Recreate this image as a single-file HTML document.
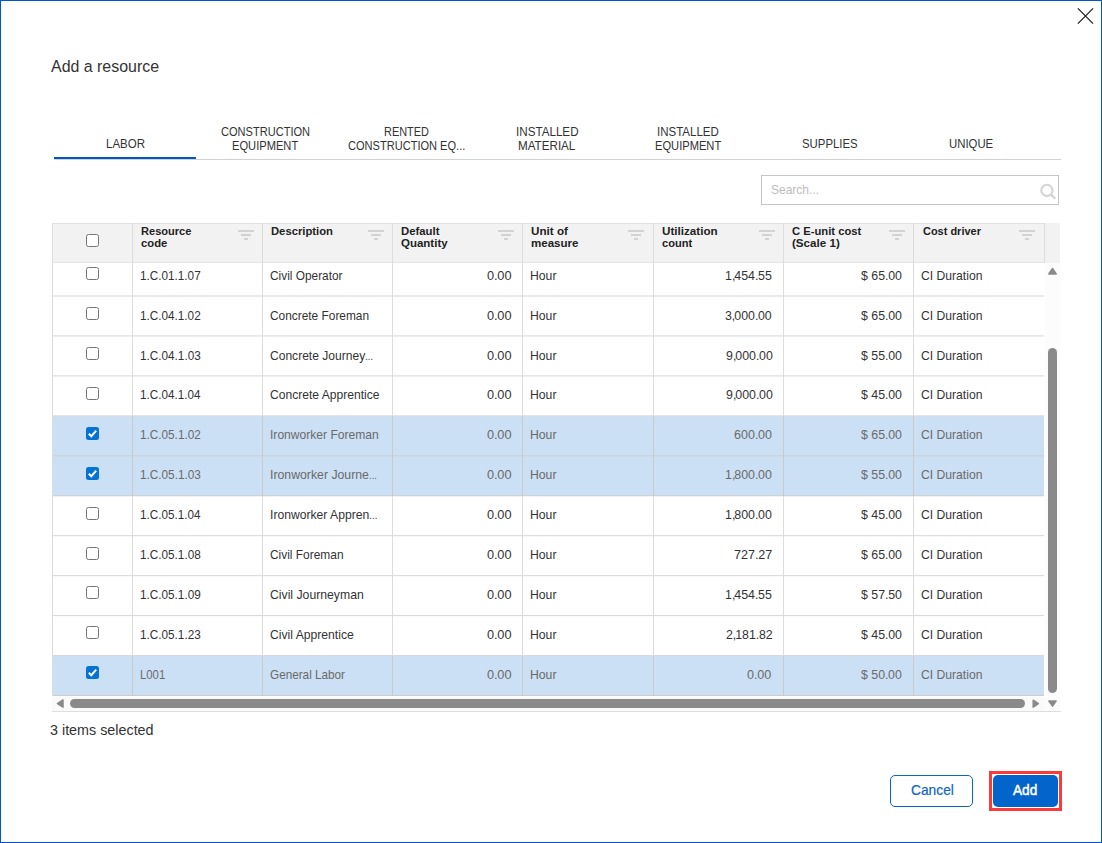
<!DOCTYPE html><html><head><meta charset="utf-8"><title>Add a resource</title><style>

html,body{margin:0;padding:0;background:#fff;}
body{width:1102px;height:843px;position:relative;overflow:hidden;font-family:"Liberation Sans",sans-serif;}
.a{position:absolute;}
.t{position:absolute;white-space:nowrap;line-height:20px;height:20px;transform-origin:0 50%;}
.cb{position:absolute;width:11px;height:11px;border:1px solid #767676;border-radius:2.5px;background:#fff;}
.cm{margin-right:-1.1px}.pd{margin-right:-0.4px}
.cbk{position:absolute;width:13px;height:13px;border-radius:2.5px;background:#0573d4;}
.sel{position:absolute;left:53px;width:991px;height:40px;background:#cbdff5;}
.f{position:absolute;background:#d2d2d2;height:2px;}

</style></head><body>
<div class="a" style="left:0;top:0;width:1100px;height:841px;border:1px solid #0058c8;"></div>
<svg class="a" style="left:1073px;top:4px" width="24" height="24" viewBox="0 0 24 24"><path d="M4.9 4.4 L20.1 19.6 M20.1 4.4 L4.9 19.6" stroke="#1e1e1e" stroke-width="1.25" fill="none"/></svg>
<div class="a" style="left:54px;top:159px;width:1007px;height:1px;background:#d2d2d2;"></div>
<div class="a" style="left:54px;top:157px;width:142px;height:2px;background:#0058c8;"></div>
<div class="a" style="left:761px;top:175px;width:296px;height:28px;border:1px solid #c6c6c6;background:#fff;"></div>
<svg class="a" style="left:1037px;top:181px" width="22" height="22" viewBox="0 0 22 22"><circle cx="9.9" cy="9.4" r="5.6" stroke="#d4d4d4" stroke-width="2.1" fill="none"/><path d="M14 13.6 L18.3 17.8" stroke="#d4d4d4" stroke-width="2.3" fill="none"/></svg>
<div class="a" style="left:52px;top:223px;width:1008px;height:40px;background:#f2f2f2;"></div>
<div class="a" style="left:52px;top:223px;width:993px;height:1px;background:#e0e0e0;"></div>
<div class="a" style="left:52px;top:262px;width:993px;height:1px;background:#e4e4e4;"></div>
<div class="a" style="left:53px;top:416px;width:991px;height:40px;background:#cbdff5;"></div>
<div class="a" style="left:53px;top:456px;width:991px;height:40px;background:#cbdff5;"></div>
<div class="a" style="left:53px;top:656px;width:991px;height:39px;background:#cbdff5;"></div>
<div class="a" style="left:53px;top:295px;width:991px;height:1px;background:rgba(214,214,214,0.50);"></div><div class="a" style="left:53px;top:296px;width:991px;height:1px;background:rgba(214,214,214,0.50);"></div>
<div class="a" style="left:53px;top:335px;width:991px;height:1px;background:rgba(214,214,214,0.55);"></div><div class="a" style="left:53px;top:336px;width:991px;height:1px;background:rgba(214,214,214,0.45);"></div>
<div class="a" style="left:53px;top:375px;width:991px;height:1px;background:rgba(214,214,214,0.60);"></div><div class="a" style="left:53px;top:376px;width:991px;height:1px;background:rgba(214,214,214,0.40);"></div>
<div class="a" style="left:53px;top:415px;width:991px;height:1px;background:rgba(214,214,214,0.65);"></div><div class="a" style="left:53px;top:416px;width:991px;height:1px;background:rgba(214,214,214,0.35);"></div>
<div class="a" style="left:53px;top:455px;width:991px;height:1px;background:rgba(205,205,205,0.70);"></div><div class="a" style="left:53px;top:456px;width:991px;height:1px;background:rgba(205,205,205,0.30);"></div>
<div class="a" style="left:53px;top:495px;width:991px;height:1px;background:rgba(205,205,205,0.75);"></div><div class="a" style="left:53px;top:496px;width:991px;height:1px;background:rgba(205,205,205,0.25);"></div>
<div class="a" style="left:53px;top:535px;width:991px;height:1px;background:rgba(214,214,214,0.80);"></div><div class="a" style="left:53px;top:536px;width:991px;height:1px;background:rgba(214,214,214,0.20);"></div>
<div class="a" style="left:53px;top:575px;width:991px;height:1px;background:rgba(214,214,214,0.85);"></div><div class="a" style="left:53px;top:576px;width:991px;height:1px;background:rgba(214,214,214,0.15);"></div>
<div class="a" style="left:53px;top:615px;width:991px;height:1px;background:rgba(214,214,214,0.90);"></div><div class="a" style="left:53px;top:616px;width:991px;height:1px;background:rgba(214,214,214,0.10);"></div>
<div class="a" style="left:53px;top:655px;width:991px;height:1px;background:rgba(214,214,214,0.95);"></div><div class="a" style="left:53px;top:656px;width:991px;height:1px;background:rgba(214,214,214,0.05);"></div>
<div class="a" style="left:53px;top:695px;width:991px;height:1px;background:rgba(205,205,205,1.00);"></div>
<div class="a" style="left:52px;top:223px;width:1px;height:473px;background:#dcdcdc;"></div>
<div class="a" style="left:132px;top:223px;width:1px;height:473px;background:#dcdcdc;"></div>
<div class="a" style="left:262px;top:223px;width:1px;height:473px;background:#dcdcdc;"></div>
<div class="a" style="left:392px;top:223px;width:1px;height:473px;background:#dcdcdc;"></div>
<div class="a" style="left:522px;top:223px;width:1px;height:473px;background:#dcdcdc;"></div>
<div class="a" style="left:653px;top:223px;width:1px;height:473px;background:#dcdcdc;"></div>
<div class="a" style="left:783px;top:223px;width:1px;height:473px;background:#dcdcdc;"></div>
<div class="a" style="left:913px;top:223px;width:1px;height:473px;background:#dcdcdc;"></div>
<div class="a" style="left:1044px;top:223px;width:1px;height:40px;background:#dcdcdc;"></div>
<div class="a" style="left:132px;top:416px;width:1px;height:40px;background:#cacaca;"></div>
<div class="a" style="left:262px;top:416px;width:1px;height:40px;background:#cacaca;"></div>
<div class="a" style="left:392px;top:416px;width:1px;height:40px;background:#cacaca;"></div>
<div class="a" style="left:522px;top:416px;width:1px;height:40px;background:#cacaca;"></div>
<div class="a" style="left:653px;top:416px;width:1px;height:40px;background:#cacaca;"></div>
<div class="a" style="left:783px;top:416px;width:1px;height:40px;background:#cacaca;"></div>
<div class="a" style="left:913px;top:416px;width:1px;height:40px;background:#cacaca;"></div>
<div class="a" style="left:132px;top:456px;width:1px;height:40px;background:#cacaca;"></div>
<div class="a" style="left:262px;top:456px;width:1px;height:40px;background:#cacaca;"></div>
<div class="a" style="left:392px;top:456px;width:1px;height:40px;background:#cacaca;"></div>
<div class="a" style="left:522px;top:456px;width:1px;height:40px;background:#cacaca;"></div>
<div class="a" style="left:653px;top:456px;width:1px;height:40px;background:#cacaca;"></div>
<div class="a" style="left:783px;top:456px;width:1px;height:40px;background:#cacaca;"></div>
<div class="a" style="left:913px;top:456px;width:1px;height:40px;background:#cacaca;"></div>
<div class="a" style="left:132px;top:656px;width:1px;height:40px;background:#cacaca;"></div>
<div class="a" style="left:262px;top:656px;width:1px;height:40px;background:#cacaca;"></div>
<div class="a" style="left:392px;top:656px;width:1px;height:40px;background:#cacaca;"></div>
<div class="a" style="left:522px;top:656px;width:1px;height:40px;background:#cacaca;"></div>
<div class="a" style="left:653px;top:656px;width:1px;height:40px;background:#cacaca;"></div>
<div class="a" style="left:783px;top:656px;width:1px;height:40px;background:#cacaca;"></div>
<div class="a" style="left:913px;top:656px;width:1px;height:40px;background:#cacaca;"></div>
<div class="f" style="left:238px;top:230px;width:16px"></div>
<div class="f" style="left:241px;top:234px;width:10px"></div>
<div class="f" style="left:244px;top:238px;width:4px"></div>
<div class="f" style="left:368px;top:230px;width:16px"></div>
<div class="f" style="left:371px;top:234px;width:10px"></div>
<div class="f" style="left:374px;top:238px;width:4px"></div>
<div class="f" style="left:498px;top:230px;width:16px"></div>
<div class="f" style="left:501px;top:234px;width:10px"></div>
<div class="f" style="left:504px;top:238px;width:4px"></div>
<div class="f" style="left:628px;top:230px;width:16px"></div>
<div class="f" style="left:631px;top:234px;width:10px"></div>
<div class="f" style="left:634px;top:238px;width:4px"></div>
<div class="f" style="left:759px;top:230px;width:16px"></div>
<div class="f" style="left:762px;top:234px;width:10px"></div>
<div class="f" style="left:765px;top:238px;width:4px"></div>
<div class="f" style="left:889px;top:230px;width:16px"></div>
<div class="f" style="left:892px;top:234px;width:10px"></div>
<div class="f" style="left:895px;top:238px;width:4px"></div>
<div class="f" style="left:1019px;top:230px;width:16px"></div>
<div class="f" style="left:1022px;top:234px;width:10px"></div>
<div class="f" style="left:1025px;top:238px;width:4px"></div>
<div class="cb" style="left:86px;top:234px"></div>
<div class="cb" style="left:86px;top:267px"></div>
<div class="cb" style="left:86px;top:307px"></div>
<div class="cb" style="left:86px;top:347px"></div>
<div class="cb" style="left:86px;top:387px"></div>
<div class="cbk" style="left:86px;top:427px"><svg width="13" height="13" viewBox="0 0 13 13" style="display:block"><path d="M2.8 6.7 L5.3 9.2 L10.2 3.6" stroke="#fff" stroke-width="2" fill="none"/></svg></div>
<div class="cbk" style="left:86px;top:467px"><svg width="13" height="13" viewBox="0 0 13 13" style="display:block"><path d="M2.8 6.7 L5.3 9.2 L10.2 3.6" stroke="#fff" stroke-width="2" fill="none"/></svg></div>
<div class="cb" style="left:86px;top:507px"></div>
<div class="cb" style="left:86px;top:547px"></div>
<div class="cb" style="left:86px;top:586px"></div>
<div class="cb" style="left:86px;top:626px"></div>
<div class="cbk" style="left:86px;top:666px"><svg width="13" height="13" viewBox="0 0 13 13" style="display:block"><path d="M2.8 6.7 L5.3 9.2 L10.2 3.6" stroke="#fff" stroke-width="2" fill="none"/></svg></div>
<div class="a" style="left:1045px;top:263px;width:15px;height:448px;background:#fcfcfc;"></div>
<div class="a" style="left:52px;top:697px;width:993px;height:14px;background:#fafafa;"></div>
<div class="a" style="left:52px;top:711px;width:1009px;height:1px;background:#dedede;"></div>
<div class="a" style="left:1048px;top:348px;width:9px;height:345px;border-radius:4.5px;background:#8a8a8a;"></div>
<div class="a" style="left:70px;top:699px;width:955px;height:9px;border-radius:4.5px;background:#8a8a8a;"></div>
<svg class="a" style="left:0;top:0" width="1102" height="843" viewBox="0 0 1102 843"><g fill="#8a8a8a" stroke="#8a8a8a" stroke-width="1.5" stroke-linejoin="round"><path d="M57.4 703.6 L63 700 L63 707.2 Z"/><path d="M1038.3 703.7 L1033.2 700.2 L1033.2 707.2 Z"/><path d="M1052.5 706.1 L1048.9 701.1 L1056.1 701.1 Z"/><path d="M1052.5 268.5 L1048.8 274 L1056.2 274 Z"/></g></svg>
<div class="a" style="left:890px;top:775px;width:81px;height:30px;border:1px solid #0b63ce;border-radius:5px;background:#fff;"></div>
<div class="a" style="left:989px;top:771px;width:67px;height:34px;border:3px solid #fd3a3a;"></div>
<div class="a" style="left:993px;top:775px;width:65px;height:32px;border-radius:5px;background:#0364cc;"></div>
<div class="t" id="s0" style="left:51.29px;top:56.35px;font-size:16.3px;font-weight:400;color:#333;transform:scaleX(0.9785)">Add a resource</div>
<div class="t" id="s1" style="left:105.68px;top:133.50px;font-size:13px;font-weight:400;color:#333;transform:scaleX(0.8834)">LABOR</div>
<div class="t" id="s2" style="left:221.05px;top:121.50px;font-size:13px;font-weight:400;color:#333;transform:scaleX(0.8503)">CONSTRUCTION</div>
<div class="t" id="s3" style="left:231.56px;top:135.50px;font-size:13px;font-weight:400;color:#333;transform:scaleX(0.8567)">EQUIPMENT</div>
<div class="t" id="s4" style="left:383.93px;top:121.50px;font-size:13px;font-weight:400;color:#333;transform:scaleX(0.8392)">RENTED</div>
<div class="t" id="s5" style="left:347.89px;top:135.50px;font-size:13px;font-weight:400;color:#333;transform:scaleX(0.8502)">CONSTRUCTION EQ...</div>
<div class="t" id="s6" style="left:516.31px;top:121.50px;font-size:13px;font-weight:400;color:#333;transform:scaleX(0.8955)">INSTALLED</div>
<div class="t" id="s7" style="left:518.05px;top:135.50px;font-size:13px;font-weight:400;color:#333;transform:scaleX(0.8954)">MATERIAL</div>
<div class="t" id="s8" style="left:657.14px;top:121.50px;font-size:13px;font-weight:400;color:#333;transform:scaleX(0.8857)">INSTALLED</div>
<div class="t" id="s9" style="left:654.79px;top:135.50px;font-size:13px;font-weight:400;color:#333;transform:scaleX(0.8567)">EQUIPMENT</div>
<div class="t" id="s10" style="left:802.34px;top:133.50px;font-size:13px;font-weight:400;color:#333;transform:scaleX(0.8754)">SUPPLIES</div>
<div class="t" id="s11" style="left:948.51px;top:133.50px;font-size:13px;font-weight:400;color:#333;transform:scaleX(0.8736)">UNIQUE</div>
<div class="t" id="s12" style="left:770.97px;top:179.50px;font-size:13px;font-weight:400;color:#bcbcbc;transform:scaleX(0.9236)">Search...</div>
<div class="t" id="s13" style="left:141.00px;top:220.98px;font-size:11.6px;font-weight:700;color:#222;transform:scaleX(0.9543)">Resource</div>
<div class="t" id="s14" style="left:141.00px;top:232.98px;font-size:11.6px;font-weight:700;color:#222;transform:scaleX(0.9720)">code</div>
<div class="t" id="s15" style="left:271.00px;top:220.98px;font-size:11.6px;font-weight:700;color:#222;transform:scaleX(0.9704)">Description</div>
<div class="t" id="s16" style="left:401.10px;top:220.98px;font-size:11.6px;font-weight:700;color:#222;transform:scaleX(0.9797)">Default</div>
<div class="t" id="s17" style="left:401.10px;top:232.98px;font-size:11.6px;font-weight:700;color:#222;transform:scaleX(0.9911)">Quantity</div>
<div class="t" id="s18" style="left:531.10px;top:220.98px;font-size:11.6px;font-weight:700;color:#222;transform:scaleX(1.0062)">Unit of</div>
<div class="t" id="s19" style="left:531.10px;top:232.98px;font-size:11.6px;font-weight:700;color:#222;transform:scaleX(0.9963)">measure</div>
<div class="t" id="s20" style="left:661.50px;top:220.98px;font-size:11.6px;font-weight:700;color:#222;transform:scaleX(1.0056)">Utilization</div>
<div class="t" id="s21" style="left:661.50px;top:232.98px;font-size:11.6px;font-weight:700;color:#222;transform:scaleX(0.9562)">count</div>
<div class="t" id="s22" style="left:792.20px;top:220.98px;font-size:11.6px;font-weight:700;color:#222;transform:scaleX(0.9683)">C E-unit cost</div>
<div class="t" id="s23" style="left:792.20px;top:232.98px;font-size:11.6px;font-weight:700;color:#222;transform:scaleX(1.0021)">(Scale 1)</div>
<div class="t" id="s24" style="left:922.60px;top:220.98px;font-size:11.6px;font-weight:700;color:#222;transform:scaleX(0.9460)">Cost driver</div>
<div class="t" id="s25" style="left:140.10px;top:265.50px;font-size:13px;font-weight:400;color:#333;transform:scaleX(0.9025)">1.C.01.1.07</div>
<div class="t" id="s26" style="left:269.90px;top:265.50px;font-size:13px;font-weight:400;color:#333;transform:scaleX(0.9127)">Civil Operator</div>
<div class="t" id="s27" style="left:487.44px;top:265.50px;font-size:13px;font-weight:400;color:#333;transform:scaleX(0.9824)">0<span class="pd">.</span>00</div>
<div class="t" id="s28" style="left:530.10px;top:265.50px;font-size:13px;font-weight:400;color:#333;transform:scaleX(0.9391)">Hour</div>
<div class="t" id="s29" style="left:725.04px;top:265.50px;font-size:13px;font-weight:400;color:#333;transform:scaleX(0.9543)">1<span class="cm">,</span>454<span class="pd">.</span>55</div>
<div class="t" id="s30" style="left:861.07px;top:265.50px;font-size:13px;font-weight:400;color:#333;transform:scaleX(0.9517)">$ 65<span class="pd">.</span>00</div>
<div class="t" id="s31" style="left:921.10px;top:265.50px;font-size:13px;font-weight:400;color:#333;transform:scaleX(0.9343)">CI Duration</div>
<div class="t" id="s32" style="left:140.10px;top:305.50px;font-size:13px;font-weight:400;color:#333;transform:scaleX(0.9026)">1.C.04.1.02</div>
<div class="t" id="s33" style="left:269.90px;top:305.50px;font-size:13px;font-weight:400;color:#333;transform:scaleX(0.9143)">Concrete Foreman</div>
<div class="t" id="s34" style="left:487.44px;top:305.50px;font-size:13px;font-weight:400;color:#333;transform:scaleX(0.9824)">0<span class="pd">.</span>00</div>
<div class="t" id="s35" style="left:530.10px;top:305.50px;font-size:13px;font-weight:400;color:#333;transform:scaleX(0.9391)">Hour</div>
<div class="t" id="s36" style="left:725.29px;top:305.50px;font-size:13px;font-weight:400;color:#333;transform:scaleX(0.9496)">3<span class="cm">,</span>000<span class="pd">.</span>00</div>
<div class="t" id="s37" style="left:861.07px;top:305.50px;font-size:13px;font-weight:400;color:#333;transform:scaleX(0.9517)">$ 65<span class="pd">.</span>00</div>
<div class="t" id="s38" style="left:921.10px;top:305.50px;font-size:13px;font-weight:400;color:#333;transform:scaleX(0.9343)">CI Duration</div>
<div class="t" id="s39" style="left:140.10px;top:345.50px;font-size:13px;font-weight:400;color:#333;transform:scaleX(0.9036)">1.C.04.1.03</div>
<div class="t" id="s40" style="left:269.90px;top:345.50px;font-size:13px;font-weight:400;color:#333;transform:scaleX(0.9276)">Concrete Journey<span style="font-size:10px;letter-spacing:0.1px">...</span></div>
<div class="t" id="s41" style="left:487.44px;top:345.50px;font-size:13px;font-weight:400;color:#333;transform:scaleX(0.9824)">0<span class="pd">.</span>00</div>
<div class="t" id="s42" style="left:530.10px;top:345.50px;font-size:13px;font-weight:400;color:#333;transform:scaleX(0.9391)">Hour</div>
<div class="t" id="s43" style="left:725.58px;top:345.50px;font-size:13px;font-weight:400;color:#333;transform:scaleX(0.9521)">9<span class="cm">,</span>000<span class="pd">.</span>00</div>
<div class="t" id="s44" style="left:861.07px;top:345.50px;font-size:13px;font-weight:400;color:#333;transform:scaleX(0.9517)">$ 55<span class="pd">.</span>00</div>
<div class="t" id="s45" style="left:921.10px;top:345.50px;font-size:13px;font-weight:400;color:#333;transform:scaleX(0.9343)">CI Duration</div>
<div class="t" id="s46" style="left:140.10px;top:384.50px;font-size:13px;font-weight:400;color:#333;transform:scaleX(0.8992)">1.C.04.1.04</div>
<div class="t" id="s47" style="left:269.90px;top:384.50px;font-size:13px;font-weight:400;color:#333;transform:scaleX(0.9299)">Concrete Apprentice</div>
<div class="t" id="s48" style="left:487.44px;top:384.50px;font-size:13px;font-weight:400;color:#333;transform:scaleX(0.9824)">0<span class="pd">.</span>00</div>
<div class="t" id="s49" style="left:530.10px;top:384.50px;font-size:13px;font-weight:400;color:#333;transform:scaleX(0.9391)">Hour</div>
<div class="t" id="s50" style="left:725.58px;top:384.50px;font-size:13px;font-weight:400;color:#333;transform:scaleX(0.9521)">9<span class="cm">,</span>000<span class="pd">.</span>00</div>
<div class="t" id="s51" style="left:861.07px;top:384.50px;font-size:13px;font-weight:400;color:#333;transform:scaleX(0.9517)">$ 45<span class="pd">.</span>00</div>
<div class="t" id="s52" style="left:921.10px;top:384.50px;font-size:13px;font-weight:400;color:#333;transform:scaleX(0.9343)">CI Duration</div>
<div class="t" id="s53" style="left:140.10px;top:424.50px;font-size:13px;font-weight:400;color:#6a6a6a;transform:scaleX(0.9039)">1.C.05.1.02</div>
<div class="t" id="s54" style="left:269.90px;top:424.50px;font-size:13px;font-weight:400;color:#6a6a6a;transform:scaleX(0.9290)">Ironworker Foreman</div>
<div class="t" id="s55" style="left:487.44px;top:424.50px;font-size:13px;font-weight:400;color:#6a6a6a;transform:scaleX(0.9824)">0<span class="pd">.</span>00</div>
<div class="t" id="s56" style="left:530.10px;top:424.50px;font-size:13px;font-weight:400;color:#6a6a6a;transform:scaleX(0.9391)">Hour</div>
<div class="t" id="s57" style="left:734.00px;top:424.50px;font-size:13px;font-weight:400;color:#6a6a6a;transform:scaleX(0.9633)">600<span class="pd">.</span>00</div>
<div class="t" id="s58" style="left:861.07px;top:424.50px;font-size:13px;font-weight:400;color:#6a6a6a;transform:scaleX(0.9517)">$ 65<span class="pd">.</span>00</div>
<div class="t" id="s59" style="left:921.10px;top:424.50px;font-size:13px;font-weight:400;color:#6a6a6a;transform:scaleX(0.9343)">CI Duration</div>
<div class="t" id="s60" style="left:140.10px;top:464.50px;font-size:13px;font-weight:400;color:#6a6a6a;transform:scaleX(0.9048)">1.C.05.1.03</div>
<div class="t" id="s61" style="left:269.90px;top:464.50px;font-size:13px;font-weight:400;color:#6a6a6a;transform:scaleX(0.9440)">Ironworker Journe<span style="font-size:10px;letter-spacing:0.1px">...</span></div>
<div class="t" id="s62" style="left:487.44px;top:464.50px;font-size:13px;font-weight:400;color:#6a6a6a;transform:scaleX(0.9824)">0<span class="pd">.</span>00</div>
<div class="t" id="s63" style="left:530.10px;top:464.50px;font-size:13px;font-weight:400;color:#6a6a6a;transform:scaleX(0.9391)">Hour</div>
<div class="t" id="s64" style="left:725.04px;top:464.50px;font-size:13px;font-weight:400;color:#6a6a6a;transform:scaleX(0.9542)">1<span class="cm">,</span>800<span class="pd">.</span>00</div>
<div class="t" id="s65" style="left:861.07px;top:464.50px;font-size:13px;font-weight:400;color:#6a6a6a;transform:scaleX(0.9517)">$ 55<span class="pd">.</span>00</div>
<div class="t" id="s66" style="left:921.10px;top:464.50px;font-size:13px;font-weight:400;color:#6a6a6a;transform:scaleX(0.9343)">CI Duration</div>
<div class="t" id="s67" style="left:140.10px;top:504.50px;font-size:13px;font-weight:400;color:#333;transform:scaleX(0.8992)">1.C.05.1.04</div>
<div class="t" id="s68" style="left:269.90px;top:504.50px;font-size:13px;font-weight:400;color:#333;transform:scaleX(0.9350)">Ironworker Appren<span style="font-size:10px;letter-spacing:0.1px">...</span></div>
<div class="t" id="s69" style="left:487.44px;top:504.50px;font-size:13px;font-weight:400;color:#333;transform:scaleX(0.9824)">0<span class="pd">.</span>00</div>
<div class="t" id="s70" style="left:530.10px;top:504.50px;font-size:13px;font-weight:400;color:#333;transform:scaleX(0.9391)">Hour</div>
<div class="t" id="s71" style="left:725.04px;top:504.50px;font-size:13px;font-weight:400;color:#333;transform:scaleX(0.9542)">1<span class="cm">,</span>800<span class="pd">.</span>00</div>
<div class="t" id="s72" style="left:861.07px;top:504.50px;font-size:13px;font-weight:400;color:#333;transform:scaleX(0.9517)">$ 45<span class="pd">.</span>00</div>
<div class="t" id="s73" style="left:921.10px;top:504.50px;font-size:13px;font-weight:400;color:#333;transform:scaleX(0.9343)">CI Duration</div>
<div class="t" id="s74" style="left:140.10px;top:544.50px;font-size:13px;font-weight:400;color:#333;transform:scaleX(0.9031)">1.C.05.1.08</div>
<div class="t" id="s75" style="left:269.90px;top:544.50px;font-size:13px;font-weight:400;color:#333;transform:scaleX(0.9167)">Civil Foreman</div>
<div class="t" id="s76" style="left:487.44px;top:544.50px;font-size:13px;font-weight:400;color:#333;transform:scaleX(0.9824)">0<span class="pd">.</span>00</div>
<div class="t" id="s77" style="left:530.10px;top:544.50px;font-size:13px;font-weight:400;color:#333;transform:scaleX(0.9391)">Hour</div>
<div class="t" id="s78" style="left:733.73px;top:544.50px;font-size:13px;font-weight:400;color:#333;transform:scaleX(0.9677)">727<span class="pd">.</span>27</div>
<div class="t" id="s79" style="left:861.07px;top:544.50px;font-size:13px;font-weight:400;color:#333;transform:scaleX(0.9517)">$ 65<span class="pd">.</span>00</div>
<div class="t" id="s80" style="left:921.10px;top:544.50px;font-size:13px;font-weight:400;color:#333;transform:scaleX(0.9343)">CI Duration</div>
<div class="t" id="s81" style="left:140.10px;top:584.50px;font-size:13px;font-weight:400;color:#333;transform:scaleX(0.9032)">1.C.05.1.09</div>
<div class="t" id="s82" style="left:269.90px;top:584.50px;font-size:13px;font-weight:400;color:#333;transform:scaleX(0.9401)">Civil Journeyman</div>
<div class="t" id="s83" style="left:487.44px;top:584.50px;font-size:13px;font-weight:400;color:#333;transform:scaleX(0.9824)">0<span class="pd">.</span>00</div>
<div class="t" id="s84" style="left:530.10px;top:584.50px;font-size:13px;font-weight:400;color:#333;transform:scaleX(0.9391)">Hour</div>
<div class="t" id="s85" style="left:725.04px;top:584.50px;font-size:13px;font-weight:400;color:#333;transform:scaleX(0.9543)">1<span class="cm">,</span>454<span class="pd">.</span>55</div>
<div class="t" id="s86" style="left:861.07px;top:584.50px;font-size:13px;font-weight:400;color:#333;transform:scaleX(0.9517)">$ 57<span class="pd">.</span>50</div>
<div class="t" id="s87" style="left:921.10px;top:584.50px;font-size:13px;font-weight:400;color:#333;transform:scaleX(0.9343)">CI Duration</div>
<div class="t" id="s88" style="left:140.10px;top:624.50px;font-size:13px;font-weight:400;color:#333;transform:scaleX(0.9036)">1.C.05.1.23</div>
<div class="t" id="s89" style="left:269.90px;top:624.50px;font-size:13px;font-weight:400;color:#333;transform:scaleX(0.9349)">Civil Apprentice</div>
<div class="t" id="s90" style="left:487.44px;top:624.50px;font-size:13px;font-weight:400;color:#333;transform:scaleX(0.9824)">0<span class="pd">.</span>00</div>
<div class="t" id="s91" style="left:530.10px;top:624.50px;font-size:13px;font-weight:400;color:#333;transform:scaleX(0.9391)">Hour</div>
<div class="t" id="s92" style="left:725.61px;top:624.50px;font-size:13px;font-weight:400;color:#333;transform:scaleX(0.9483)">2<span class="cm">,</span>181<span class="pd">.</span>82</div>
<div class="t" id="s93" style="left:861.07px;top:624.50px;font-size:13px;font-weight:400;color:#333;transform:scaleX(0.9517)">$ 45<span class="pd">.</span>00</div>
<div class="t" id="s94" style="left:921.10px;top:624.50px;font-size:13px;font-weight:400;color:#333;transform:scaleX(0.9343)">CI Duration</div>
<div class="t" id="s95" style="left:139.90px;top:664.50px;font-size:13px;font-weight:400;color:#6a6a6a;transform:scaleX(0.8713)">L001</div>
<div class="t" id="s96" style="left:269.90px;top:664.50px;font-size:13px;font-weight:400;color:#6a6a6a;transform:scaleX(0.9027)">General Labor</div>
<div class="t" id="s97" style="left:487.44px;top:664.50px;font-size:13px;font-weight:400;color:#6a6a6a;transform:scaleX(0.9824)">0<span class="pd">.</span>00</div>
<div class="t" id="s98" style="left:530.10px;top:664.50px;font-size:13px;font-weight:400;color:#6a6a6a;transform:scaleX(0.9391)">Hour</div>
<div class="t" id="s99" style="left:747.38px;top:664.50px;font-size:13px;font-weight:400;color:#6a6a6a;transform:scaleX(0.9688)">0<span class="pd">.</span>00</div>
<div class="t" id="s100" style="left:861.38px;top:664.50px;font-size:13px;font-weight:400;color:#6a6a6a;transform:scaleX(0.9478)">$ 50<span class="pd">.</span>00</div>
<div class="t" id="s101" style="left:921.10px;top:664.50px;font-size:13px;font-weight:400;color:#6a6a6a;transform:scaleX(0.9343)">CI Duration</div>
<div class="t" id="s102" style="left:49.84px;top:720.15px;font-size:14px;font-weight:400;color:#333;transform:scaleX(1.0238)">3 items selected</div>
<div class="t" id="s103" style="left:910.66px;top:779.80px;font-size:15px;font-weight:400;color:#0b63ce;-webkit-text-stroke:0.2px #0b63ce;transform:scaleX(0.9175)">Cancel</div>
<div class="t" id="s104" style="left:1012.97px;top:779.80px;font-size:15px;font-weight:400;color:#fff;-webkit-text-stroke:0.5px #fff;transform:scaleX(0.9076)">Add</div>
</body></html>
